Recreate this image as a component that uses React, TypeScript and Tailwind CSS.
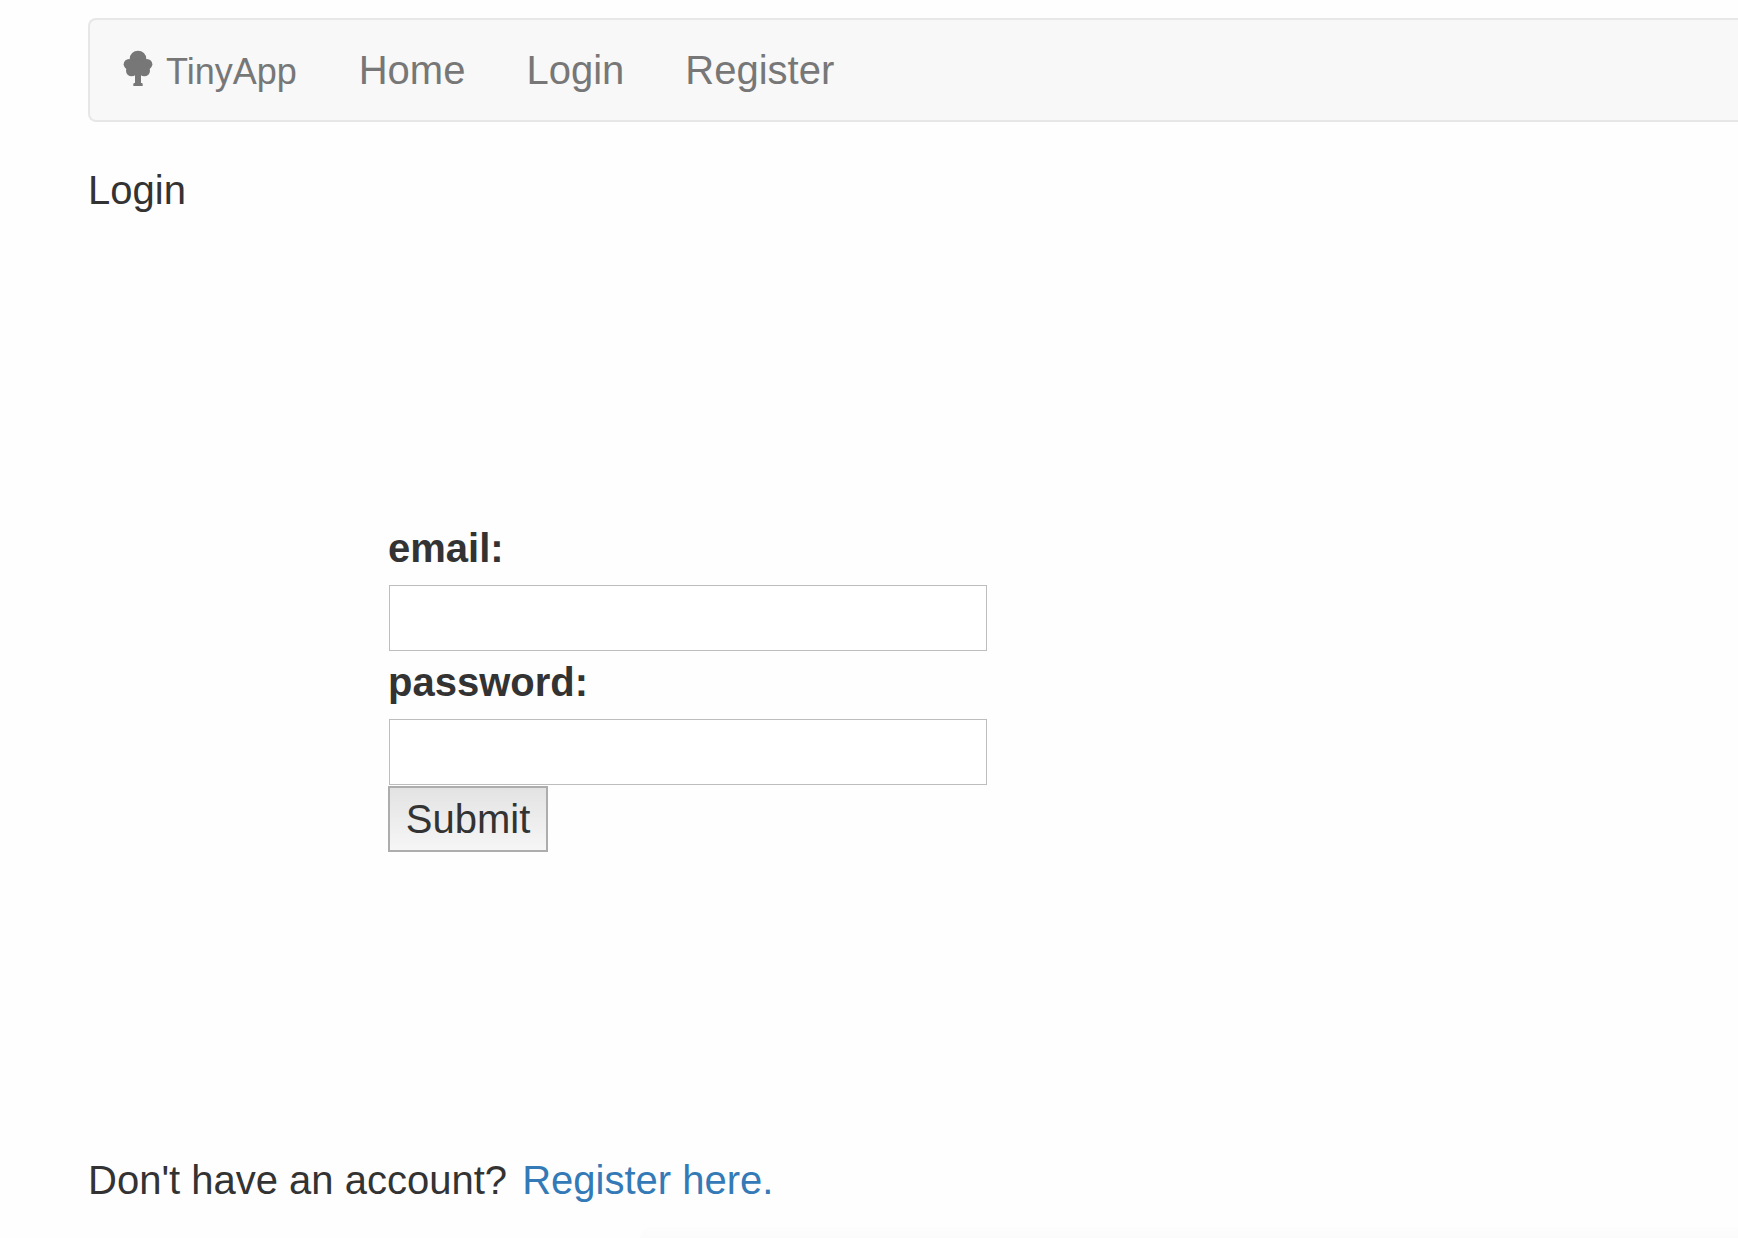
function TreeIcon() {
  return (
    <svg viewBox="0 0 108 108" className="size-9 shrink-0" fill="currentColor" aria-hidden="true">
      <circle cx="54" cy="27" r="25" />
      <circle cx="27" cy="43" r="16" />
      <circle cx="81" cy="43" r="16" />
      <circle cx="35" cy="62" r="17" />
      <circle cx="73" cy="62" r="17" />
      <path d="M27 43L54 27l27 16-7 30-11 2v24h2q3 0 3 3v6H40v-6q0-3 3-3h2V75l-11-2z" />
    </svg>
  );
}

const links = ["Home", "Login", "Register"];

const fields = [
  { name: "email", type: "email" },
  { name: "password", type: "password" },
];

export default function App() {
  return (
    <div className="min-h-screen overflow-hidden bg-[#fefefe] pl-[88px] pt-[18px] font-['Liberation_Sans',Arial,sans-serif] text-[40px] leading-[56px] text-[#333333]">
      <nav className="mb-10 flex rounded-l-lg border-2 border-r-0 border-[#e7e7e7] bg-[#f8f8f8] leading-10 text-[#777777]">
        <a href="#" className="flex gap-[10px] pb-[26px] pl-[30px] pr-8 pt-[30px] text-[36px] leading-[44px]">
          <TreeIcon />
          TinyApp
        </a>
        <ul className="flex gap-px">
          {links.map((link) => (
            <li key={link}>
              <a href="#" className="block p-[30px]">
                {link}
              </a>
            </li>
          ))}
        </ul>
      </nav>
      <main>
        <h1>Login</h1>
        <form className="flex flex-col items-start py-[300px] pl-[300px]" onSubmit={(e) => e.preventDefault()}>
          {fields.map((field) => (
            <div key={field.name}>
              <label htmlFor={field.name} className="mb-[6px] block leading-[60px] font-bold">
                {field.name}:
              </label>
              <div className="p-px">
                <input
                  id={field.name}
                  name={field.name}
                  type={field.type}
                  className="block h-[66px] w-[598px] border border-[#bdbdbd] bg-white px-1 outline-none"
                />
              </div>
            </div>
          ))}
          <button
            type="submit"
            className="h-[66px] w-40 border-2 border-[#adadad] bg-linear-to-b from-[#e3e3e3] to-[#f6f6f6]"
          >
            Submit
          </button>
        </form>
        <p>
          Don't have an account?{" "}
          <a href="#" className="ml-1 text-[#337ab7]">
            Register here.
          </a>
        </p>
        <div className="ml-[552px] mt-[19px] h-[11px] rounded-tl-full bg-linear-to-b from-[#fdfdfd] to-[#fbfbfb]" />
      </main>
    </div>
  );
}
